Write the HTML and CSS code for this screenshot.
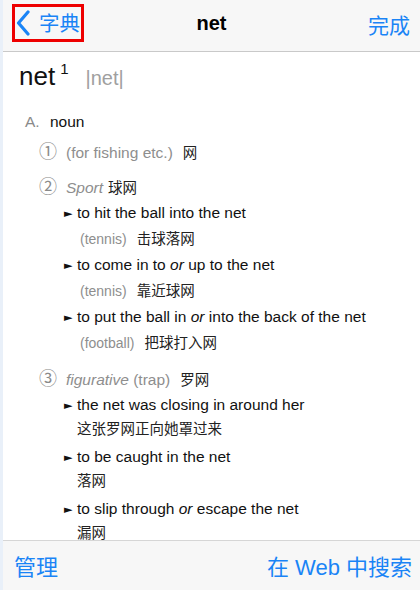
FILE: index.html
```html
<!DOCTYPE html>
<html lang="zh">
<head>
<meta charset="utf-8">
<link rel="stylesheet" href="styles.css">
</head>
<body>
<div class="page">
  <header class="topbar">
    <div class="left">
      <a class="back">
        <svg class="chev" width="14" height="26" viewBox="0 0 14 26"><path d="M12 2 L2.5 13 L12 24" fill="none" stroke="#1a84f6" stroke-width="3.2" stroke-linecap="round" stroke-linejoin="round"/></svg>
        <span class="back-label">字典</span>
      </a>
    </div>
    <div class="title">net</div>
    <div class="right"><span class="done">完成</span></div>
  </header>
  <main class="content">
    <div class="head"><span class="hw">net</span><sup class="hn">1</sup><span class="pron">|net|</span></div>
    <div class="pos"><span class="pos-l">A.</span>noun</div>

    <div class="sense">
      <div class="sense-line"><span class="num">①</span><span class="gray">(for fishing etc.)</span><span class="zh">网</span></div>
    </div>

    <div class="sense">
      <div class="sense-line"><span class="num">②</span><span class="gray it">Sport</span><span class="zh zh-tight">球网</span></div>
      <div class="ex">
        <div class="ex-en"><span class="tri">►</span>to hit the ball into the net</div>
        <div class="ex-zh ind"><span class="gray sm">(tennis)</span><span class="zh">击球落网</span></div>
      </div>
      <div class="ex">
        <div class="ex-en"><span class="tri">►</span>to come in to <i>or</i> up to the net</div>
        <div class="ex-zh ind"><span class="gray sm">(tennis)</span><span class="zh">靠近球网</span></div>
      </div>
      <div class="ex">
        <div class="ex-en"><span class="tri">►</span>to put the ball in <i>or</i> into the back of the net</div>
        <div class="ex-zh ind"><span class="gray sm">(football)</span><span class="zh">把球打入网</span></div>
      </div>
    </div>

    <div class="sense">
      <div class="sense-line"><span class="num">③</span><span class="gray"><i>figurative</i> (trap)</span><span class="zh">罗网</span></div>
      <div class="ex ex-cn">
        <div class="ex-en"><span class="tri">►</span>the net was closing in around her</div>
        <div class="ex-zh"><span class="zh0">这张罗网正向她罩过来</span></div>
      </div>
      <div class="ex ex-cn">
        <div class="ex-en"><span class="tri">►</span>to be caught in the net</div>
        <div class="ex-zh"><span class="zh0">落网</span></div>
      </div>
      <div class="ex ex-cn">
        <div class="ex-en"><span class="tri">►</span>to slip through <i>or</i> escape the net</div>
        <div class="ex-zh"><span class="zh0">漏网</span></div>
      </div>
    </div>
  </main>
  <footer class="bottombar">
    <span class="link">管理</span>
    <span class="link">在 Web 中搜索</span>
  </footer>
</div>
</body>
</html>
```
FILE: styles.css
```css
html, body {
  margin: 0;
  padding: 0;
}
body {
  width: 420px;
  height: 590px;
  overflow: hidden;
  font-family: "Liberation Sans", "Noto Sans CJK SC", sans-serif;
  color: #111;
}
.page {
  width: 417px;
  height: 590px;
  border-left: 3px solid #e9f0f9;
  display: flex;
  flex-direction: column;
  background: #fff;
}
.topbar {
  height: 51px;
  flex: none;
  background: #f7f7f7;
  border-bottom: 1px solid #c9c9c9;
  display: grid;
  grid-template-columns: 1fr auto 1fr;
  align-items: center;
}
.left {
  display: flex;
  padding-left: 9px;
}
.back {
  display: flex;
  align-items: center;
  gap: 9px;
  border: 3px solid #ee0000;
  height: 32px;
  width: 66px;
  flex: none;
  margin-top: -6px;
  white-space: nowrap;
  overflow: visible;
}
.chev {
  flex: none;
  margin-left: 1px;
}
.back-label {
  flex: none;
  font-family: "Noto Sans CJK SC", sans-serif;
  color: #1a84f6;
  font-size: 20.5px;
  line-height: 1;
  white-space: nowrap;
}
.title {
  font-weight: bold;
  font-size: 20px;
  color: #000;
  margin-top: -4px;
}
.right {
  display: flex;
  justify-content: flex-end;
  padding-right: 10px;
}
.done {
  font-family: "Noto Sans CJK SC", sans-serif;
  color: #1a84f6;
  font-size: 21px;
  margin-top: -4px;
  white-space: nowrap;
}
.content {
  flex: 1;
  overflow: hidden;
  padding-left: 16px;
  font-size: 15.5px;
}
.head {
  height: 50px;
  display: flex;
  align-items: baseline;
  padding-top: 2px;
}
.hw {
  font-size: 26px;
  line-height: 44px;
  color: #111;
}
.hn {
  font-size: 15px;
  margin-left: 5px;
  position: relative;
  top: -11px;
  vertical-align: baseline;
}
.pron {
  font-size: 20px;
  color: #a0a0a0;
  margin-left: 17px;
}
.pos {
  padding-left: 6px;
  height: 24px;
  line-height: 24px;
  margin-top: 6px;
}
.pos-l {
  color: #8a8a8a;
  display: inline-block;
  width: 25px;
}
.sense {
  padding-left: 20px;
  margin-top: 4px;
}
.sense + .sense {
  margin-top: 11px;
}
.sense-line {
  height: 24px;
  line-height: 24px;
  display: flex;
  align-items: baseline;
}
.num {
  color: #8a8a8a;
  font-family: "Noto Sans CJK SC", sans-serif;
  font-size: 18px;
  line-height: 24px;
  width: 27px;
}
.gray {
  color: #8e8e8e;
}
.sm {
  font-size: 14px;
}
.it {
  font-style: italic;
}
.zh {
  font-family: "Noto Sans CJK SC", sans-serif;
  font-size: 14.5px;
  line-height: 24px;
  color: #222;
  margin-left: 10px;
}
.zh-tight {
  margin-left: 5px;
}
.zh0 {
  font-family: "Noto Sans CJK SC", sans-serif;
  font-size: 14.5px;
  line-height: 24px;
  color: #222;
}
.ex {
  padding-left: 25px;
  margin-top: 4px;
}
.ex + .ex {
  margin-top: 3px;
}
.ex-en {
  height: 25px;
  line-height: 24px;
}
.tri {
  display: inline-block;
  font-family: "DejaVu Sans", sans-serif;
  font-size: 11px;
  width: 13px;
  position: relative;
  top: -1px;
}
.ex-zh {
  height: 24px;
  line-height: 24px;
  padding-left: 13px;
  display: flex;
  align-items: baseline;
}
.ex-cn .ex-en {
  height: 23px;
}
.sense-line + .ex-cn {
  margin-top: 4px;
}
.ex-cn + .ex-cn {
  margin-top: 5px;
}
.ex-zh.ind {
  padding-left: 16px;
}
.bottombar {
  height: 49px;
  flex: none;
  background: #f7f7f7;
  border-top: 1px solid #d6d6d6;
  display: flex;
  justify-content: space-between;
  align-items: center;
  padding: 0 8px 0 11px;
}
.link {
  font-family: "Liberation Sans", "Noto Sans CJK SC", sans-serif;
  color: #1a84f6;
  font-size: 22px;
  line-height: 30px;
  margin-top: 4px;
}
```
